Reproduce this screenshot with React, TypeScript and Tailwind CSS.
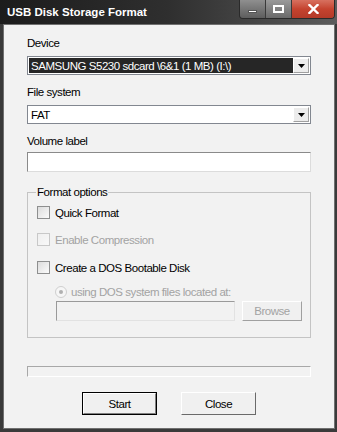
import React from 'react';

function Checkbox({ disabled }: { disabled?: boolean }) {
  return (
    <span
      className={`w-[13px] h-[13px] shrink-0 border bg-gradient-to-br ${
        disabled ? 'border-[#c8c8c8] from-[#efefef] to-[#f8f8f8]' : 'border-[#8e8f8f] from-[#dcdcdc] to-[#fbfbfb]'
      }`}
    />
  );
}

function Combo({ text, dark }: { text: string; dark?: boolean }) {
  return (
    <div className="h-[19px] border border-[#828790] bg-white p-px flex">
      <div className={`flex-1 flex items-center pl-[2px] ${dark ? 'bg-[#262626] text-white' : 'text-black'}`}>
        {text}
      </div>
      <div className="w-[16px] flex items-center justify-center bg-[#ececec] border border-t-white border-l-white border-b-[#a0a0a0] border-r-[#a0a0a0]">
        <svg width="7" height="4" viewBox="0 0 7 4">
          <path d="M0 0h7L3.5 4z" fill="#000" />
        </svg>
      </div>
    </div>
  );
}

function TitleBar() {
  return (
    <div className="h-[24px] flex items-start bg-gradient-to-r from-[#1c1c1c] via-[#2f2f2f] to-[#5c5c5c]">
      <div className="flex-1 h-full flex items-center pl-[7px] text-white font-bold text-[11.5px] tracking-normal">
        USB Disk Storage Format
      </div>
      <div className="flex h-[19px] mr-[2px] border border-t-0 border-[#2a2a2a] rounded-b-[4px] overflow-hidden">
        <div className="w-[26px] flex items-end justify-center pb-[5px] bg-gradient-to-b from-[#8f8f8f] to-[#5e5e5e] border-r border-[#3a3a3a]">
          <span className="w-[9px] h-[3px] bg-white border border-[#555]" />
        </div>
        <div className="w-[26px] flex items-center justify-center bg-gradient-to-b from-[#9a9a9a] to-[#6a6a6a] border-r border-[#3a3a3a]">
          <span className="w-[11px] h-[8px] border-2 border-white" />
        </div>
        <div className="w-[42px] flex items-center justify-center bg-gradient-to-b from-[#d7705f] via-[#c5432f] to-[#b43a28]">
          <svg width="11" height="10" viewBox="0 0 11 10">
            <path d="M1.5 1l8 8M9.5 1l-8 8" stroke="#fff" strokeWidth="2.4" strokeLinecap="square" />
          </svg>
        </div>
      </div>
    </div>
  );
}

export default function App() {
  return (
    <div className="w-[337px] h-[432px] bg-[#3a3a3a] flex flex-col font-['Liberation_Sans',Arial,sans-serif] text-[11.5px] leading-[14px] tracking-[-0.45px] text-black">
      <TitleBar />
      <div className="flex-1 ml-[3px] mr-[2px] mb-[3px] bg-[#f2f2f2] border border-[#707070] px-[23px] flex flex-col">
        <div className="mt-[11px]">Device</div>
        <div className="mt-[6px]">
          <Combo text="SAMSUNG S5230 sdcard \6&1 (1 MB) (I:\)" dark />
        </div>
        <div className="mt-[10px]">File system</div>
        <div className="mt-[6px]">
          <Combo text="FAT" />
        </div>
        <div className="mt-[10px]">Volume label</div>
        <div className="mt-[4px] h-[20px] bg-white border border-t-[#8a8a8a] border-l-[#8a8a8a] border-r-[#dcdcdc] border-b-[#dcdcdc]" />

        <div className="relative mt-[20px] h-[146px] border border-[#c4c4c4] flex flex-col">
          <span className="absolute -top-[8px] left-[8px] px-px bg-[#f2f2f2]">Format options</span>
          <div className="mt-[13px] pl-[9px] h-[13px] flex items-center gap-[5px]">
            <Checkbox />
            <span>Quick Format</span>
          </div>
          <div className="mt-[14px] pl-[9px] h-[13px] flex items-center gap-[5px] text-[#a3a3a3]">
            <Checkbox disabled />
            <span>Enable Compression</span>
          </div>
          <div className="mt-[15px] pl-[9px] h-[13px] flex items-center gap-[5px]">
            <Checkbox />
            <span>Create a DOS Bootable Disk</span>
          </div>
          <div className="mt-[11px] pl-[27px] h-[13px] flex items-center gap-[4px] text-[#a3a3a3]">
            <span className="w-[12px] h-[12px] rounded-full border border-[#cfcfcf] bg-[#f6f6f6] flex items-center justify-center">
              <span className="w-[4px] h-[4px] rounded-full bg-[#b0b0b0]" />
            </span>
            <span>using DOS system files located at:</span>
          </div>
          <div className="mt-[3px] pl-[28px] flex gap-[7px]">
            <div className="w-[179px] h-[20px] bg-[#f2f2f2] border border-t-[#9a9a9a] border-l-[#9a9a9a] border-r-[#e2e2e2] border-b-[#e2e2e2]" />
            <div className="w-[60px] h-[20px] flex items-center justify-center text-[#a3a3a3] bg-[#f0f0f0] border border-t-white border-l-white border-r-[#a0a0a0] border-b-[#a0a0a0]">
              Browse
            </div>
          </div>
        </div>

        <div className="mt-[28px] h-[11px] border border-t-[#a8a8a8] border-l-[#a8a8a8] border-r-white border-b-white" />

        <div className="mt-[15px] flex justify-center gap-[24px]">
          <div className="w-[75px] h-[23px] border border-black">
            <div className="h-full flex items-center justify-center bg-[#f0f0f0] border border-t-white border-l-white border-r-[#808080] border-b-[#808080]">
              Start
            </div>
          </div>
          <div className="w-[75px] h-[23px] flex items-center justify-center bg-[#f0f0f0] border border-t-white border-l-white border-r-[#6a6a6a] border-b-[#6a6a6a]">
            Close
          </div>
        </div>
      </div>
    </div>
  );
}
